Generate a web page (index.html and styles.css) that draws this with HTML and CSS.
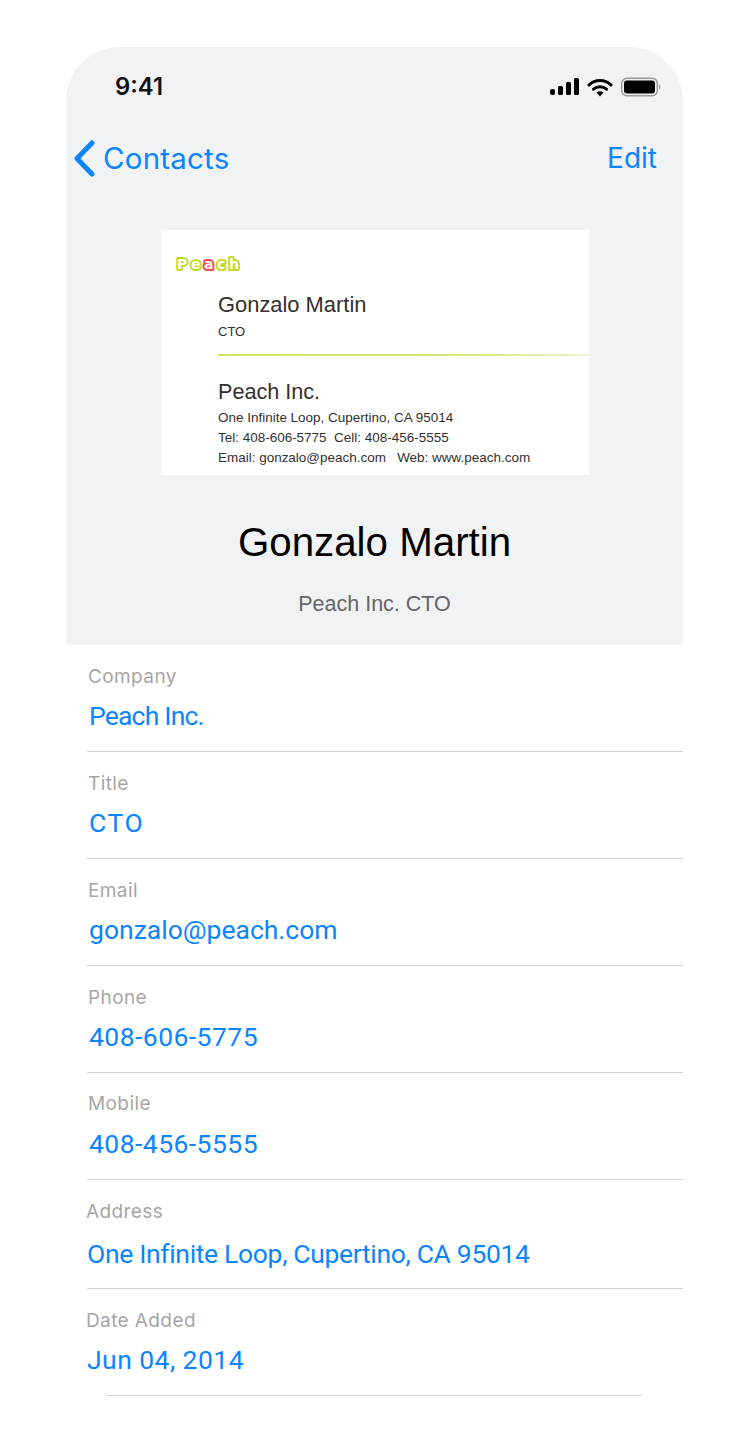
FILE: index.html
```html
<!DOCTYPE html>
<html lang="en">
<head>
    <meta charset="UTF-8">
    <meta name="viewport" content="width=device-width, initial-scale=1.0">
    <title>Contact</title>
    <link rel="stylesheet" href="styles.css">
</head>
<body>
    <div class="phone">
        <header class="top">
            <div class="status">
                <span class="time">9:41</span>
                <div class="status-icons">
                    <svg width="29" height="18" viewBox="0 0 29 18"><rect x="0" y="11" width="5" height="6" rx="2"/><rect x="8" y="8" width="5" height="9" rx="1.5"/><rect x="16" y="4" width="5" height="13" rx="1.5"/><rect x="24" y="0" width="5" height="17" rx="1.5"/></svg>
                    <svg width="26" height="19" viewBox="0 0 26 19"><path d="M2 7 A16 16 0 0 1 24 7" fill="none" stroke="#000" stroke-width="3" stroke-linecap="round"/><path d="M6.5 11.2 A10 10 0 0 1 19.5 11.2" fill="none" stroke="#000" stroke-width="3" stroke-linecap="round"/><path d="M9.5 14.6 L13 18.5 L16.5 14.6 A5 5 0 0 0 9.5 14.6 Z"/></svg>
                    <svg width="41" height="20" viewBox="0 0 41 20"><rect x="0.75" y="1.25" width="35.5" height="17.5" rx="5" fill="none" stroke="#9a9a9a" stroke-width="1.5"/><rect x="3" y="3.5" width="31" height="13" rx="3"/><path d="M38 7 a4 4 0 0 1 0 6 Z" fill="#9a9a9a"/></svg>
                </div>
            </div>
            <nav class="nav">
                <a class="back">
                    <svg width="22" height="37" viewBox="0 0 22 37"><path d="M19 3 L4 18.5 L19 34" fill="none" stroke="#0a84ff" stroke-width="5" stroke-linecap="round" stroke-linejoin="round"/></svg>
                    <span class="back-text">Contacts</span>
                </a>
                <a class="edit">Edit</a>
            </nav>
            <div class="card">
                <svg class="logo" width="80" height="24" viewBox="0 0 80 24">
                    <text y="17"><tspan x="4">P</tspan><tspan x="18">e</tspan><tspan class="logo-a" x="31">a</tspan><tspan x="44">c</tspan><tspan x="56">h</tspan></text>
                </svg>
                <div class="card-body">
                    <div class="card-name">Gonzalo Martin</div>
                    <div class="card-role">CTO</div>
                    <div class="card-rule"></div>
                    <div class="card-company">Peach Inc.</div>
                    <div class="card-line">One Infinite Loop, Cupertino, CA 95014</div>
                    <div class="card-line">Tel: 408-606-5775&nbsp; Cell: 408-456-5555</div>
                    <div class="card-line">Email: gonzalo@peach.com &nbsp; Web: www.peach.com</div>
                </div>
            </div>
            <h1 class="name">Gonzalo Martin</h1>
            <p class="sub">Peach Inc. CTO</p>
        </header>
        <ul class="fields">
            <li class="field"><div class="label">Company</div><div class="value value-narrow">Peach Inc.</div></li>
            <li class="field"><div class="label">Title</div><div class="value value-caps">CTO</div></li>
            <li class="field"><div class="label">Email</div><div class="value">gonzalo@peach.com</div></li>
            <li class="field"><div class="label">Phone</div><div class="value value-digits">408-606-5775</div></li>
            <li class="field field-mobile"><div class="label">Mobile</div><div class="value value-digits">408-456-5555</div></li>
            <li class="field field-wide"><div class="label">Address</div><div class="value value-long">One Infinite Loop, Cupertino, CA 95014</div></li>
            <li class="field field-last"><div class="label">Date Added</div><div class="value value-digits">Jun 04, 2014</div></li>
        </ul>
    </div>
</body>
</html>
```

FILE: styles.css
```css
* {
    box-sizing: border-box;
    margin: 0;
    padding: 0;
}

body {
    background: #fff;
    font-family: Inter, "Liberation Sans", sans-serif;
}

.phone {
    width: 617px;
    margin: 47px 0 0 66px;
}

.top {
    height: 598px;
    background: #f1f2f4;
    border-radius: 54px 54px 0 0;
    text-align: center;
}

/* Status bar */
.status {
    height: 56px;
    padding: 24px 21px 0 49px;
    display: flex;
    justify-content: space-between;
    align-items: center;
}

.time {
    margin-bottom: 2px;
    font-size: 23.8px;
    font-weight: 600;
    color: #111;
}

.status-icons {
    display: flex;
    align-items: center;
    gap: 8px;
}

/* Nav */
.nav {
    display: flex;
    justify-content: space-between;
    align-items: center;
    height: 40px;
    margin-top: 35px;
    padding: 0 26px 0 7px;
    color: #0a84ff;
    font-size: 28px;
}

.back {
    display: flex;
    align-items: center;
    gap: 8px;
    font-size: 29.5px;
    letter-spacing: 0.2px;
}

.back-text {
    margin-bottom: 1px;
}

/* Business card */
.card {
    width: 428px;
    height: 245px;
    margin: 52px 0 0 95px;
    background: #fff;
    text-align: left;
    color: #332f2f;
    font-family: "Liberation Sans", sans-serif;
    overflow: hidden;
}

.logo {
    display: block;
    margin: 22px 0 16px 12px;
    font-family: "DejaVu Sans", sans-serif;
    font-weight: 700;
    font-size: 14px;
    fill: #fff;
    stroke: #c3d82a;
    stroke-width: 4px;
    stroke-linejoin: round;
    paint-order: stroke fill;
}

.logo-a {
    stroke: #ef4a55;
}

.card-body {
    padding-left: 57px;
}

.card-name {
    font-size: 21.9px;
    line-height: 26px;
}

.card-role {
    margin-top: 6px;
    font-size: 13px;
    line-height: 16px;
}

.card-rule {
    height: 2px;
    margin-top: 14px;
    background: linear-gradient(to right, #d3e068, #dbe67c 70%, #f0f4cf);
}

.card-company {
    margin-top: 23px;
    font-size: 21.6px;
    line-height: 26px;
}

.card-line {
    font-size: 13.47px;
    line-height: 20px;
}

.card-company + .card-line {
    margin-top: 3px;
}

.name {
    margin-top: 43px;
    font-family: "Liberation Sans", sans-serif;
    font-weight: 400;
    font-size: 40.3px;
    line-height: 50px;
    color: #000;
}

.sub {
    margin-top: 23px;
    font-family: "Liberation Sans", sans-serif;
    font-size: 21.5px;
    line-height: 26px;
    color: #666;
}

/* Field list */
.fields {
    list-style: none;
}

.field {
    height: 107px;
    margin-left: 21px;
    padding-top: 20px;
    border-bottom: 1px solid #d0d0d0;
}

.label {
    margin-left: 1px;
    font-size: 19px;
    line-height: 24px;
    letter-spacing: 0.4px;
    color: #a6a6a6;
}

.value {
    margin: 11px 0 0 2px;
    font-family: Roboto, sans-serif;
    font-size: 26.5px;
    line-height: 32px;
    color: #0a84ff;
}

/* the reference font runs wider on digits and narrower on lowercase */
.value-narrow {
    letter-spacing: -0.8px;
}

.value-caps {
    letter-spacing: 1.6px;
}

.value-digits {
    letter-spacing: 0.45px;
}

.value-long {
    letter-spacing: -0.33px;
}

.field-mobile {
    padding-top: 19px;
}

.field-mobile .value {
    margin-top: 12px;
}

.field-wide {
    height: 109px;
    padding-top: 20px;
}

.field-wide .label, .field-last .label {
    margin-left: -1px;
}

.field-wide .value {
    margin: 14px 0 0 0;
}

.field-last .value {
    margin-left: 0;
}

.field-last {
    border-bottom: 0;
    position: relative;
}

.field-last::after {
    content: "";
    position: absolute;
    left: 20px;
    right: 41px;
    bottom: 0;
    height: 1px;
    background: #d0d0d0;
}
```
